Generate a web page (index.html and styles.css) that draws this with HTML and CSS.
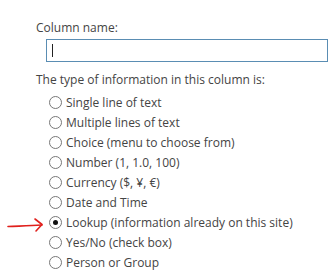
FILE: index.html
```html
<!DOCTYPE html>
<html>
<head>
<meta charset="utf-8">
<link rel="stylesheet" href="styles.css">
</head>
<body>
<div class="panel">
  <div class="label">Column name:</div>
  <div class="input"><span class="caret"></span></div>
  <div class="label type-label">The type of information in this column is:</div>
  <div class="options">
    <div class="opt"><span class="radio"></span><span>Single line of text</span></div>
    <div class="opt"><span class="radio"></span><span>Multiple lines of text</span></div>
    <div class="opt"><span class="radio"></span><span>Choice (menu to choose from)</span></div>
    <div class="opt"><span class="radio"></span><span>Number (1, 1.0, 100)</span></div>
    <div class="opt"><span class="radio"></span><span>Currency ($, ¥, €)</span></div>
    <div class="opt"><span class="radio"></span><span>Date and Time</span></div>
    <div class="opt selected">
      <svg class="arrow" width="40" height="18" viewBox="0 0 40 18"><path d="M1 11.5 C12 11 22 11 35 10" fill="none" stroke="#e0201c" stroke-width="1.6" stroke-linecap="round"/><path d="M28 4 L35 9.5 L29 16" fill="none" stroke="#e0201c" stroke-width="1.6" stroke-linecap="round" stroke-linejoin="round"/></svg>
      <span class="radio checked"></span><span>Lookup (information already on this site)</span></div>
    <div class="opt"><span class="radio"></span><span>Yes/No (check box)</span></div>
    <div class="opt"><span class="radio"></span><span>Person or Group</span></div>
  </div>
</div>
</body>
</html>
```
FILE: styles.css
```css
html, body { margin: 0; padding: 0; background: #fff; }
body { width: 335px; height: 274px; overflow: hidden; font-family: "Open Sans", "Noto Sans", sans-serif; font-size: 12px; color: #444; }
.panel { padding: 19px 0 0 36px; display: flex; flex-direction: column; }
.label { line-height: 17px; height: 17px; }
.input { margin: 3px 0 0 10px; width: 280px; height: 21px; border: 1px solid #5a8db3; display: flex; align-items: center; }
.caret { display: block; width: 1px; height: 13px; background: #222; margin-left: 5px; }
.type-label { margin-top: 9px; }
.options { display: flex; flex-direction: column; margin-top: 4px; margin-left: 13px; }
.opt { position: relative; display: flex; align-items: center; height: 20.1px; gap: 4px; white-space: nowrap; }
.radio { width: 11px; height: 11px; border: 1px solid #777; border-radius: 50%; display: flex; align-items: center; justify-content: center; flex: none; }
.radio.checked::after { content: ""; width: 5px; height: 5px; border-radius: 50%; background: #111; }
.arrow { position: absolute; left: -42px; top: 2px; }
```
